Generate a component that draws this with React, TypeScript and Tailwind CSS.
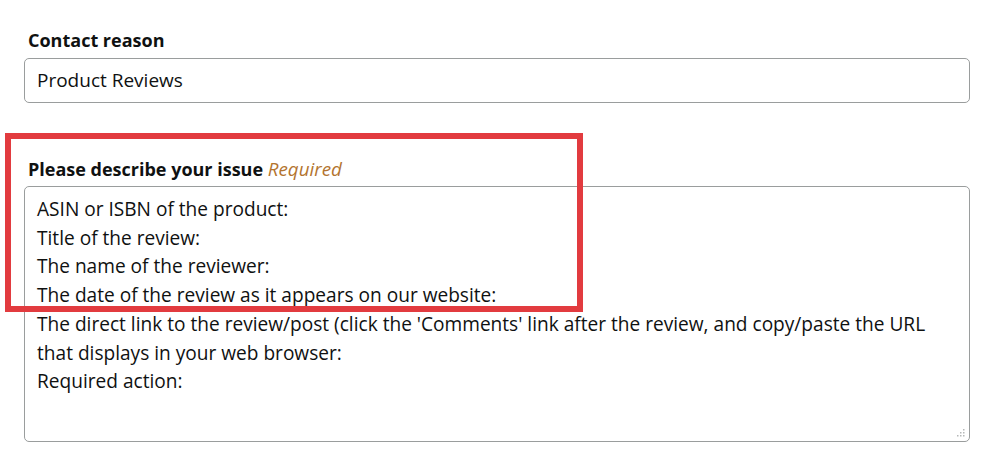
import React from "react";

const lines = [
  "ASIN or ISBN of the product:",
  "Title of the review:",
  "The name of the reviewer:",
  "The date of the review as it appears on our website:",
  "The direct link to the review/post (click the 'Comments' link after the review, and copy/paste the URL",
  "that displays in your web browser:",
  "Required action:",
];

export default function App() {
  return (
    <div
      className="relative w-[984px] h-[453px] bg-white text-[#0f1111] overflow-hidden"
      style={{ fontFamily: '"Open Sans", "Noto Sans", Arial, sans-serif' }}
    >
      <div className="pl-[24px] pr-[14px] pt-[28px]">
        <div className="pl-[4px] text-[18px] font-bold leading-[24px]">Contact reason</div>
        <div className="mt-[6px] h-[45px] w-[946px] rounded-[5px] border border-[#9a9d9d] flex items-center pl-[12px] text-[19px]">
          Product Reviews
        </div>
        <div className="mt-[54px] pl-[4px] text-[18px] leading-[24px]">
          <span className="font-bold">Please describe your issue</span>{" "}
          <span className="italic text-[18.8px] text-[#b3742f]">Required</span>
        </div>
        <div className="relative mt-[5px] h-[256px] w-[946px] rounded-[5px] border border-[#9a9d9d] pl-[12px] pt-[8px] text-[19.1px] leading-[28.7px]">
          {lines.map((l, i) => (
            <div key={i} className="whitespace-nowrap">
              {l}
            </div>
          ))}
          <svg className="absolute right-[3px] bottom-[3px]" width="10" height="10" viewBox="0 0 10 10">
            <g fill="#b5b8b8">
              <rect x="7" y="1" width="1.5" height="1.5" />
              <rect x="4" y="4" width="1.5" height="1.5" />
              <rect x="7" y="4" width="1.5" height="1.5" />
              <rect x="1" y="7" width="1.5" height="1.5" />
              <rect x="4" y="7" width="1.5" height="1.5" />
              <rect x="7" y="7" width="1.5" height="1.5" />
            </g>
          </svg>
        </div>
      </div>
      <div className="absolute left-[5px] top-[133px] w-[578px] h-[179px] border-[6px] border-[#e23b3f] pointer-events-none" />
    </div>
  );
}
